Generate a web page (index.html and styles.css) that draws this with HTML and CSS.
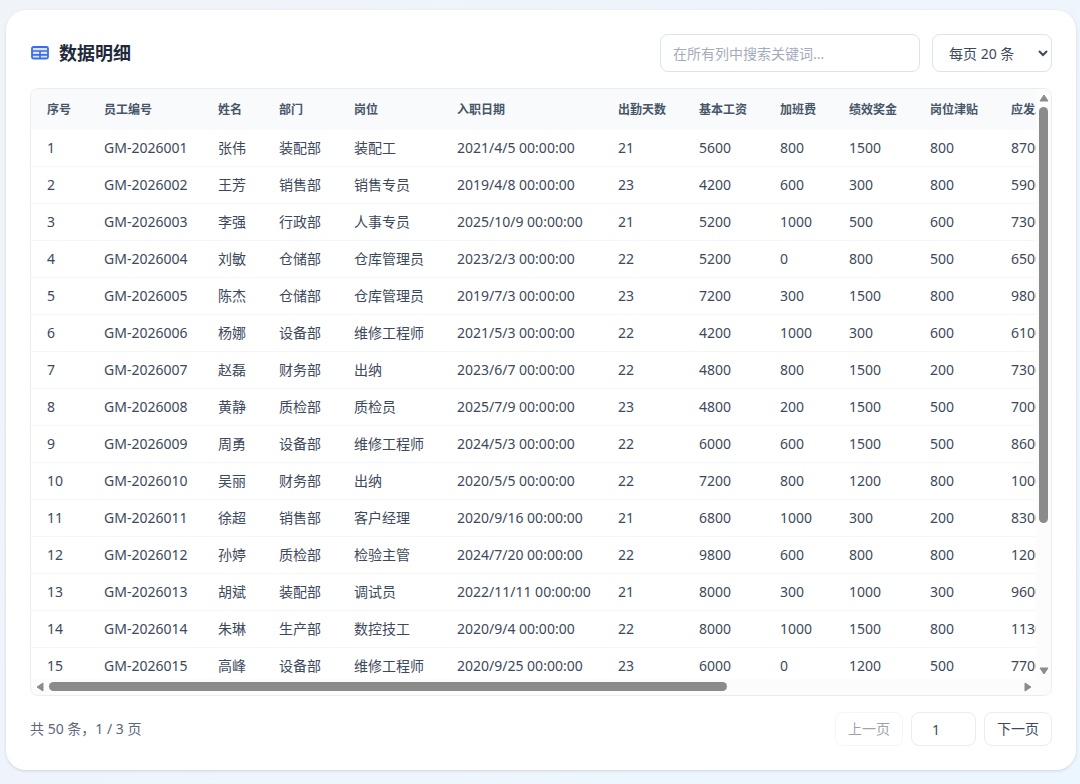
FILE: index.html
```html
<!DOCTYPE html>
<html lang="zh-CN">
<head>
<meta charset="utf-8">
<meta name="viewport" content="width=device-width, initial-scale=1">
<title>数据明细</title>
<link rel="stylesheet" href="styles.css">
</head>
<body>
<main class="card">
  <header class="card-head">
    <h2 class="title">
      <svg class="title-icon" viewBox="0 0 18 14" aria-hidden="true"><rect x="1" y="1" width="16" height="11.5" rx="1.5" fill="#dbe6fe" stroke="#3b6cf0" stroke-width="1.8"/><path d="M1 5h16M1 8.8h16M9 5v7.5" fill="none" stroke="#3b6cf0" stroke-width="1.7"/></svg>
      数据明细
    </h2>
    <div class="tools">
      <input class="search" type="text" aria-label="搜索" placeholder="在所有列中搜索关键词...">
      <select class="page-size" aria-label="每页条数"><option>每页 20 条</option></select>
    </div>
  </header>

  <section class="table-box">
    <div class="viewport">
      <table class="data">
        <colgroup><col class="w-no"><col class="w-id"><col class="w-name"><col class="w-dept"><col class="w-post"><col class="w-date"><col class="w-num"><col class="w-num"><col class="w-ot"><col class="w-num"><col class="w-num"><col class="w-num"></colgroup>
        <thead>
          <tr><th>序号</th><th>员工编号</th><th>姓名</th><th>部门</th><th>岗位</th><th>入职日期</th><th>出勤天数</th><th>基本工资</th><th>加班费</th><th>绩效奖金</th><th>岗位津贴</th><th>应发工资</th></tr>
        </thead>
        <tbody>
          <tr><td>1</td><td>GM-2026001</td><td>张伟</td><td>装配部</td><td>装配工</td><td>2021/4/5 00:00:00</td><td>21</td><td>5600</td><td>800</td><td>1500</td><td>800</td><td>8700</td></tr>
          <tr><td>2</td><td>GM-2026002</td><td>王芳</td><td>销售部</td><td>销售专员</td><td>2019/4/8 00:00:00</td><td>23</td><td>4200</td><td>600</td><td>300</td><td>800</td><td>5900</td></tr>
          <tr><td>3</td><td>GM-2026003</td><td>李强</td><td>行政部</td><td>人事专员</td><td>2025/10/9 00:00:00</td><td>21</td><td>5200</td><td>1000</td><td>500</td><td>600</td><td>7300</td></tr>
          <tr><td>4</td><td>GM-2026004</td><td>刘敏</td><td>仓储部</td><td>仓库管理员</td><td>2023/2/3 00:00:00</td><td>22</td><td>5200</td><td>0</td><td>800</td><td>500</td><td>6500</td></tr>
          <tr><td>5</td><td>GM-2026005</td><td>陈杰</td><td>仓储部</td><td>仓库管理员</td><td>2019/7/3 00:00:00</td><td>23</td><td>7200</td><td>300</td><td>1500</td><td>800</td><td>9800</td></tr>
          <tr><td>6</td><td>GM-2026006</td><td>杨娜</td><td>设备部</td><td>维修工程师</td><td>2021/5/3 00:00:00</td><td>22</td><td>4200</td><td>1000</td><td>300</td><td>600</td><td>6100</td></tr>
          <tr><td>7</td><td>GM-2026007</td><td>赵磊</td><td>财务部</td><td>出纳</td><td>2023/6/7 00:00:00</td><td>22</td><td>4800</td><td>800</td><td>1500</td><td>200</td><td>7300</td></tr>
          <tr><td>8</td><td>GM-2026008</td><td>黄静</td><td>质检部</td><td>质检员</td><td>2025/7/9 00:00:00</td><td>23</td><td>4800</td><td>200</td><td>1500</td><td>500</td><td>7000</td></tr>
          <tr><td>9</td><td>GM-2026009</td><td>周勇</td><td>设备部</td><td>维修工程师</td><td>2024/5/3 00:00:00</td><td>22</td><td>6000</td><td>600</td><td>1500</td><td>500</td><td>8600</td></tr>
          <tr><td>10</td><td>GM-2026010</td><td>吴丽</td><td>财务部</td><td>出纳</td><td>2020/5/5 00:00:00</td><td>22</td><td>7200</td><td>800</td><td>1200</td><td>800</td><td>10000</td></tr>
          <tr><td>11</td><td>GM-2026011</td><td>徐超</td><td>销售部</td><td>客户经理</td><td>2020/9/16 00:00:00</td><td>21</td><td>6800</td><td>1000</td><td>300</td><td>200</td><td>8300</td></tr>
          <tr><td>12</td><td>GM-2026012</td><td>孙婷</td><td>质检部</td><td>检验主管</td><td>2024/7/20 00:00:00</td><td>22</td><td>9800</td><td>600</td><td>800</td><td>800</td><td>12000</td></tr>
          <tr><td>13</td><td>GM-2026013</td><td>胡斌</td><td>装配部</td><td>调试员</td><td>2022/11/11 00:00:00</td><td>21</td><td>8000</td><td>300</td><td>1000</td><td>300</td><td>9600</td></tr>
          <tr><td>14</td><td>GM-2026014</td><td>朱琳</td><td>生产部</td><td>数控技工</td><td>2020/9/4 00:00:00</td><td>22</td><td>8000</td><td>1000</td><td>1500</td><td>800</td><td>11300</td></tr>
          <tr><td>15</td><td>GM-2026015</td><td>高峰</td><td>设备部</td><td>维修工程师</td><td>2020/9/25 00:00:00</td><td>23</td><td>6000</td><td>0</td><td>1200</td><td>500</td><td>7700</td></tr>
        </tbody>
      </table>
    </div>
    <div class="bar bar-v">
      <button class="arrow" type="button" aria-label="向上滚动"><svg viewBox="0 0 10 8"><path d="M5 1 9 7H1z"/></svg></button>
      <div class="track"><div class="thumb"></div></div>
      <button class="arrow" type="button" aria-label="向下滚动"><svg viewBox="0 0 10 8"><path d="M1 1h8L5 7z"/></svg></button>
    </div>
    <div class="bar bar-h">
      <button class="arrow" type="button" aria-label="向左滚动"><svg viewBox="0 0 8 10"><path d="M7 1v8L1 5z"/></svg></button>
      <div class="track"><div class="thumb"></div></div>
      <button class="arrow" type="button" aria-label="向右滚动"><svg viewBox="0 0 8 10"><path d="M1 1v8l6-4z"/></svg></button>
    </div>
    <div class="bar"></div>
  </section>

  <footer class="card-foot">
    <span class="summary">共 50 条，1 / 3 页</span>
    <nav class="pager" aria-label="分页">
      <button class="page-btn" type="button" disabled>上一页</button>
      <input class="page-no" type="number" value="1" min="1" max="3" aria-label="页码">
      <button class="page-btn" type="button">下一页</button>
    </nav>
  </footer>
</main>
</body>
</html>
```
FILE: styles.css
```css
* { box-sizing: border-box; }

body {
  margin: 0;
  padding: 10px 4px 14px 6px;
  min-height: 100vh;
  background: linear-gradient(135deg, #f0f4f8 0%, #eff4fc 40%, #ecf6ff 100%);
  color: #3c495c;
  font: 14px/20px "Noto Sans", "Noto Sans CJK SC", sans-serif;
}

input, select, button { font: inherit; color: inherit; }

.card {
  padding: 24px;
  border-radius: 20px;
  background: #fff;
  box-shadow: 0 1px 3px rgba(15, 23, 42, 0.14);
}

.card-head, .card-foot, .tools, .title, .pager {
  display: flex;
  align-items: center;
}
.card-head, .card-foot { justify-content: space-between; }
.card-head { margin-bottom: 16px; }
.card-foot { margin-top: 16px; }

.title {
  margin: 0;
  gap: 10px;
  font-size: 18px;
  line-height: 28px;
  font-weight: 700;
  color: #1e293b;
}
.title-icon { width: 18px; height: 14px; margin-left: 1px; }

.tools { gap: 12px; }
.search, .page-size {
  height: 38px;
  border: 1px solid #dbe3ee;
  border-radius: 8px;
  background: #fff;
}
.search { width: 260px; padding: 0 12px; }
.search::placeholder { color: #a3acba; opacity: 1; }
.page-size { width: 120px; padding: 0 0 0 12px; }

.table-box {
  display: grid;
  grid-template-columns: minmax(0, 1fr) 15px;
  grid-template-rows: auto 16px;
  border: 1px solid #e8edf4;
  border-radius: 8px;
  overflow: hidden;
}
.viewport { height: calc(100vh - 194px); overflow: hidden; }

.data {
  width: 1045px;
  min-width: 100%;
  table-layout: fixed;
  border-collapse: separate;
  border-spacing: 0;
}
.w-no { width: 57px; }
.w-id { width: 114px; }
.w-name { width: 61px; }
.w-dept { width: 75px; }
.w-post { width: 103px; }
.w-date { width: 161px; }
.w-num { width: 81px; }
.w-ot { width: 69px; }

.data th, .data td {
  padding: 0 16px;
  text-align: left;
  white-space: nowrap;
}
.data th {
  height: 41px;
  background: #f8fafc;
  color: #475569;
  font-size: 12px;
  font-weight: 700;
}
.data td {
  height: 37px;
  border-bottom: 1px solid #f3f6fa;
}

.bar { display: flex; background: #fcfcfc; }
.bar-v { flex-direction: column; }
.arrow {
  display: flex;
  align-items: center;
  justify-content: center;
  flex: none;
  padding: 0;
  border: 0;
  background: none;
}
.arrow path { fill: #8b8b8b; stroke: #8b8b8b; stroke-width: 1; stroke-linejoin: round; }
.bar-v .arrow { height: 17px; }
.bar-h .arrow { width: 17px; }
.bar-v svg { width: 10px; height: 8px; }
.bar-h svg { width: 8px; height: 10px; }
.track { flex: 1; }
.bar-v .track { padding: 1px 3px; }
.bar-h .track { padding: 3px 1px 4px; }
.thumb { border-radius: 5px; background: #8b8b8b; }
.bar-v .thumb { height: 75%; }
.bar-h .thumb { width: 70%; height: 100%; }

.summary { color: #5b687b; }
.pager { gap: 8px; }
.page-btn, .page-no {
  height: 34px;
  padding: 0 12px;
  border: 1px solid #e8edf2;
  border-radius: 8px;
  background: #fff;
}
.page-btn:disabled { opacity: 0.5; }
.page-no { width: 65px; text-align: center; }
```
